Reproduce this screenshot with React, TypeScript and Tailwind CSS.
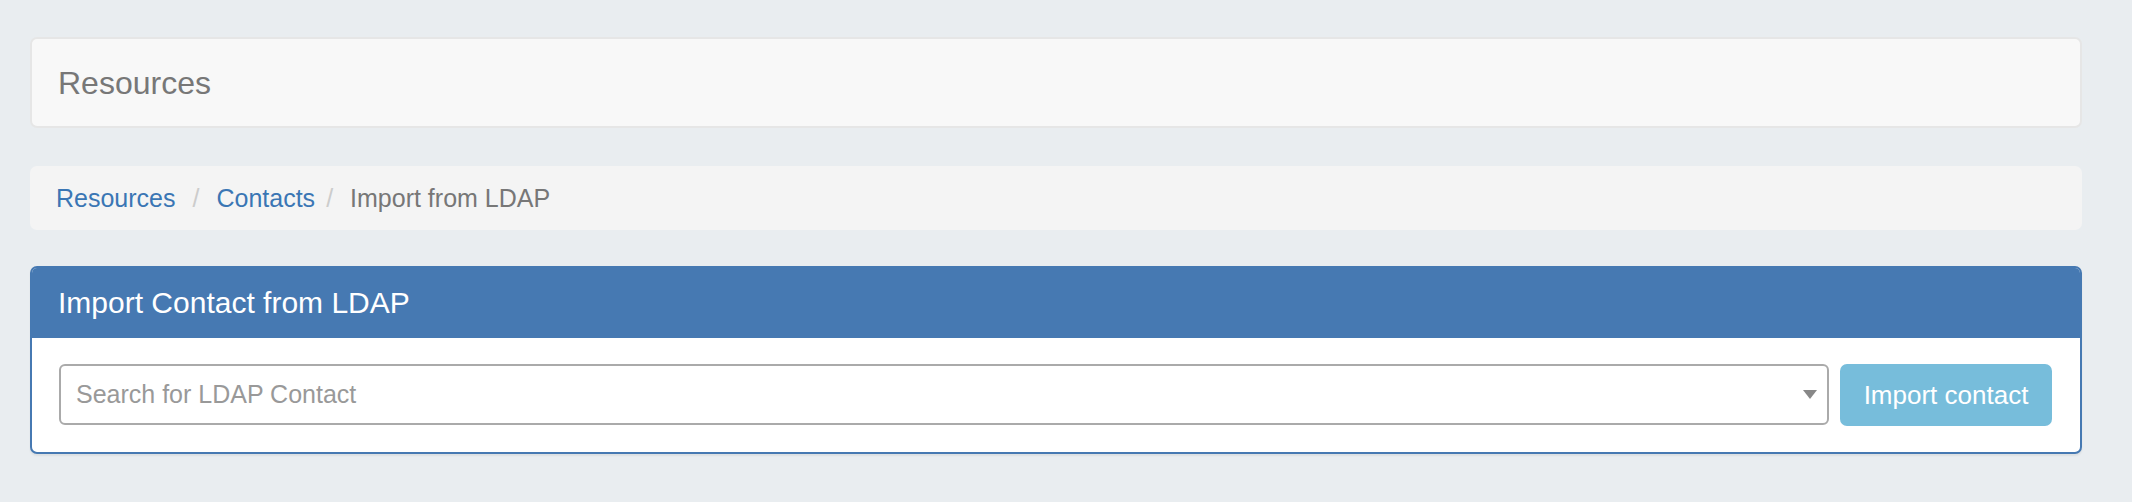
import type { FC } from "react";

const font = { fontFamily: '"Liberation Sans", Arial, sans-serif' };

const Navbar: FC = () => (
    <div className="flex h-[91px] items-center rounded-[7px] border-2 border-[#e6e6e6] bg-[#f8f8f8] px-[26px]">
        <span className="text-[32px] leading-none text-[#777]">Resources</span>
    </div>
);

const Breadcrumb: FC = () => (
    <div className="mt-[38px] flex h-[64px] items-center rounded-[7px] bg-[#f4f4f4] px-[26px] text-[25px] leading-none">
        <a className="text-[#3a76b4]">Resources</a>
        <span className="ml-[17px] mr-[17px] text-[#ccc]">/</span>
        <a className="text-[#3a76b4]">Contacts</a>
        <span className="ml-[11px] mr-[17px] text-[#ccc]">/</span>
        <span className="text-[#777]">Import from LDAP</span>
    </div>
);

const ImportPanel: FC = () => (
    <div className="mt-[36px] overflow-hidden rounded-[7px] border-2 border-[#4679b2] bg-white shadow-[0_2px_2px_rgba(0,0,0,0.06)]">
        <div className="flex h-[70px] items-center bg-[#4679b2] px-[26px]">
            <h3 className="text-[30px] leading-none text-white">Import Contact from LDAP</h3>
        </div>
        <div className="flex gap-[11px] pb-[26px] pl-[27px] pr-[28px] pt-[26px]">
            <div className="flex h-[61px] flex-1 items-center rounded-[6px] border-2 border-[#aaa] pl-[15px] pr-[9px]">
                <span className="flex-1 text-[25px] leading-none text-[#999]">Search for LDAP Contact</span>
                <svg width="14" height="9" viewBox="0 0 14 9" className="mr-[1px]">
                    <path d="M0 0 L14 0 L7 9 Z" fill="#888" />
                </svg>
            </div>
            <button className="flex h-[62px] w-[212px] items-center justify-center rounded-[7px] bg-[#77bddb] text-[26px] leading-none text-white">
                Import contact
            </button>
        </div>
    </div>
);

function App() {
    return (
        <div className="min-h-[502px] bg-[#e9edf0] pt-[37px]" style={font}>
            <div className="ml-[30px] w-[2052px]">
                <Navbar />
                <Breadcrumb />
                <ImportPanel />
            </div>
        </div>
    );
}

export default App;
